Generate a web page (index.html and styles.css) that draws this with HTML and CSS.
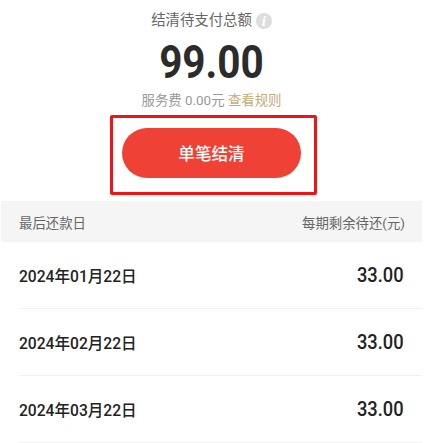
FILE: index.html

```html
<!DOCTYPE html>
<html lang="zh">
<head>
  <meta charset="UTF-8" />
  <title>单笔结清</title>
  <link rel="stylesheet" href="styles.css">
</head>
<body>
  <div class="page">
    <div class="summary">
      <div class="total-label">结清待支付总额 <span class="help">i</span></div>
      <div class="amount">99.00</div>
      <div class="fee">服务费 0.00元 <span class="rules">查看规则</span></div>
      <div class="highlight">
        <button class="pay">单笔结清</button>
      </div>
    </div>
    <div class="table-head">
      <span>最后还款日</span>
      <span>每期剩余待还(元)</span>
    </div>
    <div class="row"><span class="date">2024年01月22日</span><span class="money">33.00</span></div>
    <div class="row"><span class="date">2024年02月22日</span><span class="money">33.00</span></div>
    <div class="row"><span class="date">2024年03月22日</span><span class="money">33.00</span></div>
  </div>
</body>
</html>
```

FILE: styles.css

```css
html, body {
  margin: 0;
  background-color: #fff;
  overflow: hidden;
}
body {
  font-family: Roboto, "Noto Sans CJK SC", sans-serif;
  color: #222;
}
.page {
  width: 421px;
  height: 443px;
  margin-left: 1px;
  overflow: hidden;
}
.summary {
  display: flex;
  flex-direction: column;
  align-items: center;
  padding-top: 11px;
}
.total-label {
  display: flex;
  align-items: center;
  gap: 4px;
  font-size: 14.4px;
  line-height: 20px;
  color: #666;
}
.help {
  width: 16px;
  height: 16px;
  border-radius: 50%;
  background-color: #ddd;
  color: #fff;
  font-family: "Liberation Serif", serif;
  font-size: 15px;
  font-style: italic;
  font-weight: 700;
  line-height: 16px;
  text-align: center;
}
.amount {
  margin-top: 4px;
  font-size: 46px;
  line-height: 54px;
  font-weight: 700;
  color: #2b2b2b;
  transform: scaleX(0.88);
}
.fee {
  margin-top: 3px;
  font-size: 13.4px;
  line-height: 18px;
  color: #999;
}
.rules {
  color: #c2ab78;
}
.highlight {
  margin-top: 5px;
  margin-left: 4px;
  width: 207px;
  height: 80px;
  box-sizing: border-box;
  padding: 10px 0 0 9px;
  border: 3px solid #f01414;
  border-radius: 2px;
}
.pay {
  display: block;
  width: 179px;
  height: 50px;
  border: none;
  border-radius: 25px;
  background-color: #ef4135;
  color: #fff;
  font-family: inherit;
  font-size: 16.6px;
  font-weight: 500;
}
.table-head {
  margin-top: 6px;
  height: 41px;
  padding: 0 17px 0 18px;
  background-color: #f5f5f5;
  display: flex;
  align-items: center;
  justify-content: space-between;
  font-size: 13.4px;
  color: #666;
}
.row {
  height: 66px;
  margin-left: 18px;
  padding-right: 18px;
  border-bottom: 1px solid #f2f2f2;
  display: flex;
  align-items: center;
  justify-content: space-between;
}
.date {
  font-size: 15.6px;
  font-weight: 500;
  color: #222;
}
.money {
  font-size: 21px;
  font-weight: 500;
  color: #222;
  transform: scaleX(0.87);
  transform-origin: right center;
}
```
